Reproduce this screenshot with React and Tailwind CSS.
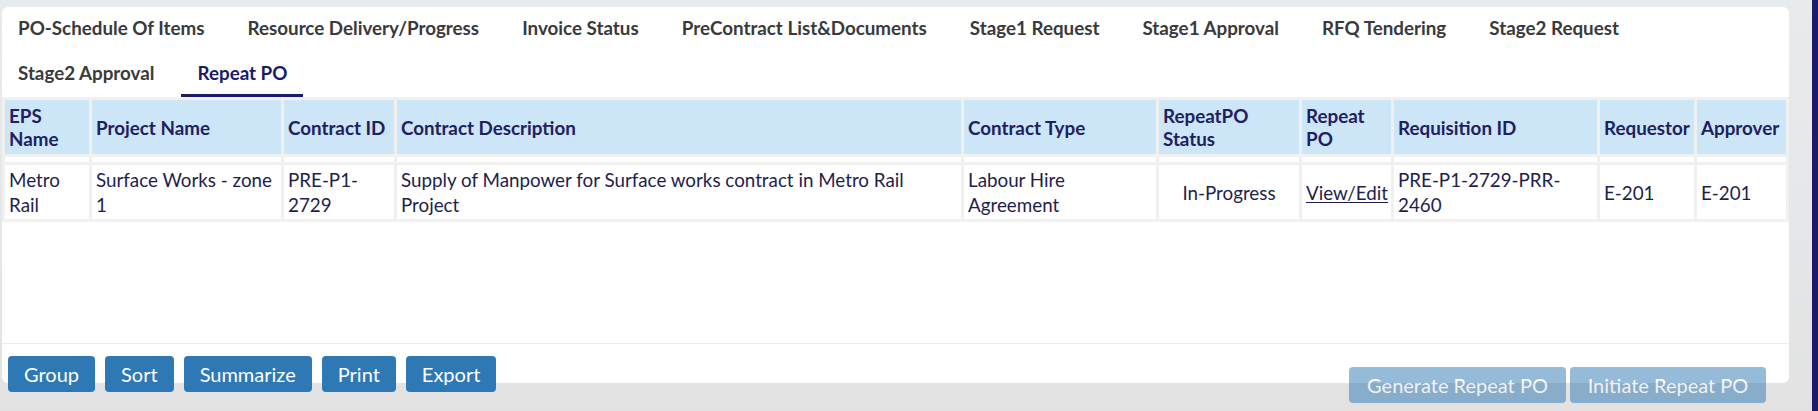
import React from "react";

const tabsRow = [
  "PO-Schedule Of Items",
  "Resource Delivery/Progress",
  "Invoice Status",
  "PreContract List&Documents",
  "Stage1 Request",
  "Stage1 Approval",
  "RFQ Tendering",
  "Stage2 Request",
  "Stage2 Approval",
  "Repeat PO",
];

const cols = [
  { label: "EPS Name", w: "w-[84px]" },
  { label: "Project Name", w: "w-[189px]" },
  { label: "Contract ID", w: "w-[110px]" },
  { label: "Contract Description", w: "w-[564px]" },
  { label: "Contract Type", w: "w-[192px]" },
  { label: "RepeatPO Status", w: "w-[140px]" },
  { label: "Repeat PO", w: "w-[89px]" },
  { label: "Requisition ID", w: "w-[203px]" },
  { label: "Requestor", w: "w-[94px]" },
  { label: "Approver", w: "w-[89px]" },
];

const App = () => {
  return (
    <div className="w-[1818px] h-[411px] overflow-hidden flex bg-gradient-to-b from-[#e8ebee] to-[#e2e2e2] font-['Lato','Open_Sans',sans-serif]">
      <div className="w-[1812px] pl-[2px] pt-[7px]">
        {/* card */}
        <div className="w-[1787px] h-[376px] bg-white rounded-md flex flex-col">
          <div className="shrink-0 flex flex-wrap gap-x-[11px]">
            {tabsRow.map((t) => {
              const active = t === "Repeat PO";
              return (
                <div
                  key={t}
                  className={
                    active
                      ? "h-[45px] px-4 flex items-center border-b-[3px] border-[#1b1a6b] text-[#1b1a6b] text-[18.8px] font-bold"
                      : "h-[45px] px-4 flex items-center border-b-[3px] border-transparent text-[#3a3a3a] text-[18.8px] font-bold"
                  }
                >
                  {t}
                </div>
              );
            })}
          </div>

          <div className="shrink-0 h-[246px] flex flex-col">
            <table className="w-[1787px] table-fixed border-separate border-spacing-[3px] bg-[#f0f0f0]">
              <colgroup>
                {cols.map((c) => (
                  <col key={c.label} className={c.w} />
                ))}
              </colgroup>
              <thead>
                <tr className="h-[54px]">
                  {cols.map((c) => (
                    <th
                      key={c.label}
                      className="bg-[#cce5f7] px-[4px] text-left align-middle text-[18.8px] font-bold leading-[23px] text-[#1f2060]"
                    >
                      {c.label}
                    </th>
                  ))}
                </tr>
              </thead>
              <tbody>
                <tr className="h-[5px]">
                  {cols.map((c) => (
                    <td key={c.label} className="bg-white p-0" />
                  ))}
                </tr>
                <tr className="h-[54px] text-[18.8px] leading-[25px] text-[#1e1e4e]">
                  <td className="bg-white px-[4px] align-middle">Metro Rail</td>
                  <td className="bg-white px-[4px] align-middle">Surface Works - zone 1</td>
                  <td className="bg-white px-[4px] align-middle">PRE-P1-2729</td>
                  <td className="bg-white px-[4px] align-middle">
                    Supply of Manpower for Surface works contract in Metro Rail Project
                  </td>
                  <td className="bg-white px-[4px] align-middle">Labour Hire Agreement</td>
                  <td className="bg-white px-[4px] align-middle text-center">In-Progress</td>
                  <td className="bg-white px-[4px] align-middle">
                    <span className="underline underline-offset-2">View/Edit</span>
                  </td>
                  <td className="bg-white px-[4px] align-middle">PRE-P1-2729-PRR-2460</td>
                  <td className="bg-white px-[4px] align-middle">E-201</td>
                  <td className="bg-white px-[4px] align-middle">E-201</td>
                </tr>
              </tbody>
            </table>
          </div>

          <div className="shrink-0 border-t border-[#ebebeb] pt-[12px] px-[6px] flex gap-[10px]">
            {["Group", "Sort", "Summarize", "Print", "Export"].map((b) => (
              <button
                key={b}
                className="h-[36px] px-[16px] rounded-[4px] bg-[#2e79b5] text-white text-[20px]"
              >
                {b}
              </button>
            ))}
          </div>
        </div>

        <div className="w-[1787px] -mt-[16px] pr-[23px] flex justify-end gap-[4px]">
          <button className="h-[36px] w-[217px] rounded-[4px] bg-[#2e79b5] opacity-50 text-white text-[20px]">
            Generate Repeat PO
          </button>
          <button className="h-[36px] w-[196px] rounded-[4px] bg-[#2e79b5] opacity-50 text-white text-[20px]">
            Initiate Repeat PO
          </button>
        </div>
      </div>
      <div className="w-[6px] h-[411px] bg-[#1c1a6e]" />
    </div>
  );
};

export default App;
